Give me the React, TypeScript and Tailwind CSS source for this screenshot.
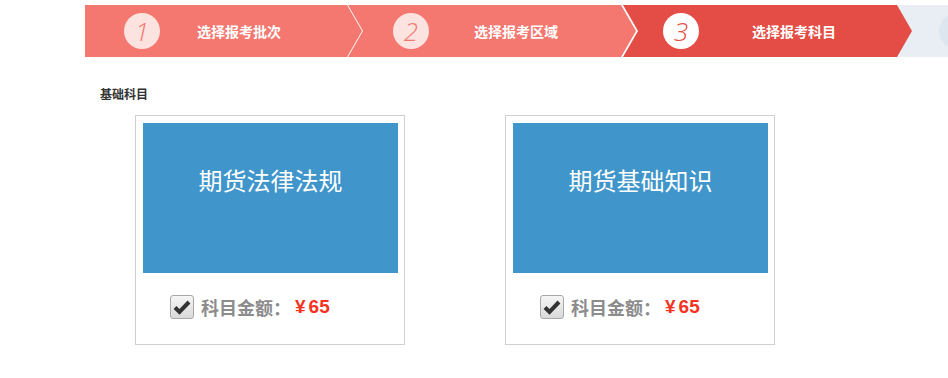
import React from 'react';

// step bar + subject cards

type Step = {
  num: string;
  label: string;
  width: string;
  clip: string;
  bg: string;
  circle: string;
  numColor: string;
  offset: string;
  circleMl: string;
  textMl: string;
};

const steps: Step[] = [
  {
    num: '1',
    label: '选择报考批次',
    width: 'w-[277px]',
    clip: '[clip-path:polygon(0_0,262px_0,277px_50%,262px_100%,0_100%)]',
    bg: 'bg-[#f47870]',
    circle: 'bg-[#fde3df]',
    numColor: 'text-[#f47870]',
    offset: '',
    circleMl: 'ml-[39px]',
    textMl: 'ml-[37px]',
  },
  {
    num: '2',
    label: '选择报考区域',
    width: 'w-[288px]',
    clip: '[clip-path:polygon(0_0,273px_0,288px_50%,273px_100%,0_100%,15px_50%)]',
    bg: 'bg-[#f47870]',
    circle: 'bg-[#fde3df]',
    numColor: 'text-[#f47870]',
    offset: '-ml-[14px]',
    circleMl: 'ml-[45px]',
    textMl: 'ml-[45px]',
  },
  {
    num: '3',
    label: '选择报考科目',
    width: 'w-[289px]',
    clip: '[clip-path:polygon(0_0,274px_0,289px_50%,274px_100%,0_100%,15px_50%)]',
    bg: 'bg-[#e44d45]',
    circle: 'bg-white',
    numColor: 'text-[#e44d45]',
    offset: '-ml-[13px]',
    circleMl: 'ml-[40px]',
    textMl: 'ml-[53px]',
  },
];

const subjects = ['期货法律法规', '期货基础知识'];

function CheckBox() {
  return (
    <div className="flex h-[24px] w-[24px] items-center justify-center rounded-[3px] border border-[#a8a8a8] bg-gradient-to-b from-[#f6f6f6] to-[#d9d9d9]">
      <svg width="18" height="16" viewBox="0 0 18 16">
        <path d="M2 8.5 L6.5 13 L16 3" fill="none" stroke="#333" strokeWidth="4" strokeLinejoin="miter" />
      </svg>
    </div>
  );
}

export default function App() {
  return (
    <div className="relative h-[378px] w-[948px] overflow-hidden bg-white font-['Noto_Sans_CJK_SC',sans-serif]">
      {/* Steps */}
      <div className="mt-[5px] flex h-[52px]">
        <div className="w-[85px] shrink-0" />
        {steps.map((s) => (
          <div
            key={s.num}
            className={`relative z-10 flex h-full shrink-0 items-center ${s.width} ${s.clip} ${s.bg} ${s.offset}`}
          >
            <div
              className={`flex h-[36px] w-[36px] shrink-0 items-center justify-center rounded-full ${s.circle} ${s.circleMl}`}
            >
              <span className={`font-['Open_Sans',sans-serif] text-[26px] font-light italic leading-none ${s.numColor}`}>
                {s.num}
              </span>
            </div>
            <span className={`text-[14px] font-bold text-white ${s.textMl}`}>{s.label}</span>
          </div>
        ))}
        <div className="relative z-0 -ml-[15px] flex flex-1 items-center bg-[#e9eef4]">
          <div className="ml-[42px] h-[36px] w-[36px] shrink-0 rounded-full bg-[#dde5ef]" />
        </div>
      </div>

      {/* Heading */}
      <div className="ml-[100px] mt-[28px] h-[18px] text-[12px] font-bold leading-[18px] text-[#333]">基础科目</div>

      {/* Cards */}
      <div className="ml-[135px] mt-[12px] flex gap-[100px]">
        {subjects.map((name) => (
          <div key={name} className="h-[230px] w-[270px] border border-[#cfcfcf] px-[7px] pt-[7px]">
            <div className="h-[150px] w-[255px] bg-[#4096cb] pt-[39px] text-center text-[24px] leading-[36px] text-white">
              {name}
            </div>
            <div className="ml-[27px] mt-[22px] flex h-[24px] items-center">
              <CheckBox />
              <span className="ml-[7px] text-[18px] font-bold text-[#8c8c8c]">科目金额：</span>
              <span className="ml-[4px] font-['Liberation_Sans',sans-serif] text-[19px] font-bold text-[#f5331f]">
                ¥<span className="ml-[3px]">65</span>
              </span>
            </div>
          </div>
        ))}
      </div>
    </div>
  );
}
